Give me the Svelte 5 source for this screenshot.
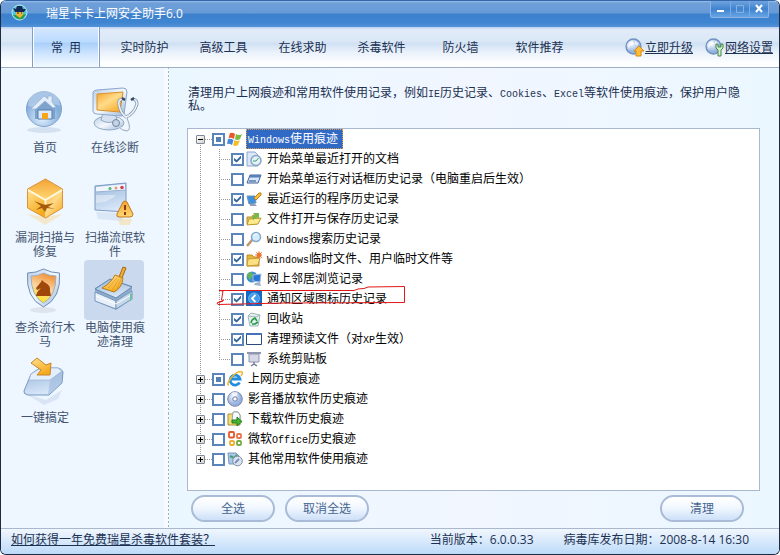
<script>
  const tabs = ["实时防护", "高级工具", "在线求助", "杀毒软件", "防火墙", "软件推荐"];

  const tools = [
    { icon: "home", text: "首页" },
    { icon: "diagnose", text: "在线诊断" },
    { icon: "cube", text: "漏洞扫描与修复" },
    { icon: "scan", text: "扫描流氓软件" },
    { icon: "shield", text: "查杀流行木马" },
    { icon: "broom", text: "电脑使用痕迹清理" },
    { icon: "onekey", text: "一键搞定" },
  ];

  let activeTool = "broom";
  let selected = "windows";

  let groups = [
    {
      id: "windows",
      text: "Windows使用痕迹",
      open: true,
      partial: true,
      items: [
        { icon: "recent", text: "开始菜单最近打开的文档", checked: true },
        { icon: "run", text: "开始菜单运行对话框历史记录（电脑重启后生效）", checked: false },
        { icon: "program", text: "最近运行的程序历史记录", checked: true },
        { icon: "folder", text: "文件打开与保存历史记录", checked: false },
        { icon: "search", text: "Windows搜索历史记录", checked: false },
        { icon: "temp", text: "Windows临时文件、用户临时文件等", checked: true },
        { icon: "network", text: "网上邻居浏览记录", checked: false },
        { icon: "tray", text: "通知区域图标历史记录", checked: true },
        { icon: "recycle", text: "回收站", checked: true },
        { icon: "prefetch", text: "清理预读文件（对XP生效）", checked: true },
        { icon: "clipboard", text: "系统剪贴板", checked: false },
      ],
    },
    { id: "ie", text: "上网历史痕迹", partial: true, items: [] },
    { id: "media", text: "影音播放软件历史痕迹", partial: false, items: [] },
    { id: "download", text: "下载软件历史痕迹", partial: false, items: [] },
    { id: "office", text: "微软Office历史痕迹", partial: false, items: [] },
    { id: "other", text: "其他常用软件使用痕迹", partial: false, items: [] },
  ];

  const intro =
    "清理用户上网痕迹和常用软件使用记录，例如IE历史记录、Cookies、Excel等软件使用痕迹，保护用户隐私。";

  // latin words are set in a half-width face
  function split(text) {
    return text.split(/([A-Za-z]+)/).filter((t) => t);
  }

  function setAll(value) {
    groups = groups.map((g) => ({
      ...g,
      partial: false,
      checked: value,
      items: g.items.map((i) => ({ ...i, checked: value })),
    }));
  }
</script>

{#snippet mixed(text)}
  {#each split(text) as part}{#if /[A-Za-z]/.test(part)}<span class="latin">{part}</span>{:else}{part}{/if}{/each}
{/snippet}

{#snippet toolIcon(name)}
  <svg width="60" height="60" viewBox="0 0 60 60" aria-hidden="true">
    {#if name === "home"}
      <ellipse cx="30" cy="50" rx="17" ry="3" fill="#c9d8ea" opacity=".7" />
      <circle cx="30" cy="29" r="17.500" fill="url(#ball)" stroke="#7fa3cf" />
      <path d="M14 26a16 16 0 0 1 32 0c-8-5-16 4-32 0z" fill="#fff" opacity=".3" />
      <path d="m21 28 11-9 9 9v11H21z" fill="#7da3cd" />
      <path d="m17 29 13-13 4 3v-3h4v6l4 5-3 1-8-7-9 8z" fill="#e3eefa" stroke="#8eacd0" stroke-width=".6" />
      <path d="M24 30h14v9H24z" fill="#dceafa" stroke="#587fae" />
      <path d="M28 33h6v6h-6z" fill="#f8a51c" />
    {:else if name === "diagnose"}
      <ellipse cx="25" cy="43" rx="15" ry="7" fill="url(#steel)" stroke="#92a9c5" />
      <path d="M19 33h12l2 7q-8 5-16 0z" fill="#d5e1f0" stroke="#92a9c5" />
      <path d="M9 12q1-2 4-2l26-2q4 0 4 4l-3 22q0 2-3 2l-24-2q-4 0-4-3z" fill="url(#steel)" stroke="#8ca7ce" />
      <path d="m13 14 26-2-3 20-23-2z" fill="url(#orange)" stroke="#d9902f" />
      <path d="M38 19q-4 1-3 6 2 9 7 12 8-3 11-13 0-4-4-5" fill="none" stroke="#7f94ad" stroke-width="3" />
      <path d="M38 19q-4 1-3 6 2 9 7 12 8-3 11-13 0-4-4-5M42 37q5 13 0 13-5 0-9-5" fill="none" stroke="#edf3f9" stroke-width="1.500" />
      <path d="M43 38q5 12 0 13-5 0-9-5" fill="none" stroke="#98aac0" />
      <path d="m38 18 3 2m6 0 3-2" stroke="#35475d" stroke-width="2.500" />
      <circle cx="32" cy="43" r="3.500" fill="#c3d2e5" stroke="#71869f" />
    {:else if name === "cube"}
      <path d="m13 44 18 11 18-11-18 3z" fill="#f8d793" opacity=".45" />
      <path d="m31.500 9 17 10-17 11-18-11z" fill="url(#amber)" />
      <path d="m13.500 19 18 11v18l-18-10z" fill="url(#yellow)" />
      <path d="m48.500 19-17 11v18l17-10z" fill="url(#orange)" />
      <path d="m31.500 9 17 10v19l-17 10-18-10V19z" fill="none" stroke="#dd9437" stroke-linejoin="round" />
      <path d="m14 20 17.500 10L48 20M31.500 30v4" fill="none" stroke="#fff8dc" stroke-width="2" />
      <path d="m20 31 11 4 9-2-6 4 7 2-8-1-2 4-3-4-6 2 5-4z" fill="#a55a0d" />
    {:else if name === "scan"}
      <path d="m12 42 28 1-2 8-24-2z" fill="#cdddf0" opacity=".6" />
      <path d="m11 16 31-3v29l-31-2z" fill="url(#pane)" stroke="#7d9bc5" />
      <path d="m12 17 29-3v6l-29 2z" fill="#eef5fd" />
      <path d="m11 22 31-2" stroke="#9bb5d6" />
      <circle cx="26" cy="18.500" r="1.500" fill="#4cb66a" />
      <circle cx="32" cy="18" r="1.500" fill="#e49a7e" />
      <circle cx="38" cy="17.500" r="1.800" fill="#d8414e" />
      <path d="M12 25h20q-6 7-20 8z" fill="#fff" opacity=".4" />
      <path d="M39 32q2-2 4 0l6 12q0 3-3 3H35q-3 0-2-3z" fill="url(#amber)" stroke="#c47a1a" />
      <path d="M41 35v5m0 2v3" stroke="#8a3c10" stroke-width="2" />
      <path d="M34 49h14l-2 6H36z" fill="#f8d793" opacity=".5" />
    {:else if name === "shield"}
      <ellipse cx="29" cy="50" rx="13" ry="3" fill="#d9e0ea" opacity=".8" />
      <path d="M13.500 13q9 0 16-4 8 4 16 4 2 25-16 34-18-9-16-34z" fill="url(#steel)" stroke="#6f8fb8" />
      <path d="M17 16q7 0 12.500-3 6 3 12.500 3 0 20-12.500 27Q17 36 17 16z" fill="url(#fire)" stroke="#9cb0c8" />
      <path d="M22 36q1-5 5-8l-4 2-1-2 5-6 1-2 2 2q7 3 6 9l1 5z" fill="#a0480c" />
    {:else if name === "broom"}
      <path d="m11 28 15-9 22 7v13L32 50 11 41z" fill="#8eabcb" />
      <path d="m11 29 15-10 22 8-16 11z" fill="url(#pane)" stroke="#6688b0" />
      <path d="m11 32 21 9v8l-21-8z" fill="#e7f0fa" stroke="#7897bd" />
      <path d="m32 41 16-10v8L32 49z" fill="#c5d7ea" stroke="#7897bd" />
      <path d="m12 36 20 8 15-9" fill="none" stroke="#fff" />
      <path d="m46 33 2 1v6l-2 1z" fill="#6ec19c" />
      <path d="m39 7 3 1-4 10-3-1z" fill="#f5ab2b" stroke="#a66815" />
      <path d="m31 15 8 3q-1 10-9 14l-12-4q9-5 13-13z" fill="url(#yellow)" stroke="#b97c16" />
      <path d="m33 18-9 10m11-9-7 11m9-11-4 10M31 15l8 4" stroke="#d99a26" stroke-width=".7" fill="none" />
    {:else if name === "onekey"}
      <path d="m12 44 20 6 16-10-4 9-14 6z" fill="#d3e1f1" opacity=".8" />
      <path d="m17 24 9-6h18q4 1 5 4l-1 11-13 12H14q-5-1-4-4z" fill="url(#pane)" stroke="#7797c1" />
      <path d="m17 24 10-6h17l4 3-12 9H15z" fill="#e3effb" stroke="#9db5d4" stroke-width=".7" />
      <path d="m36 30 12-9v12L34 45z" fill="#9db9dc" opacity=".6" />
      <path d="m17 13 6-5 9 7 5-2-1 12H23l4-5z" fill="url(#yellow)" stroke="#ca8426" />
    {/if}
  </svg>
{/snippet}

{#snippet icon(name)}
  <svg class="icon" width="16" height="16" viewBox="0 0 16 16" aria-hidden="true">
    {#if name === "windows"}
      <path d="M3 2q3-1 5 1L7 8Q4 6 1.500 7z" fill="#e8582a" />
      <path d="M9 3q3 2 6 0l-2 5q-3 2-5 0z" fill="#7cba42" />
      <path d="M1 8q3-1 5.500 1L5 14q-3-2-5-1z" fill="#4688dc" />
      <path d="M7.500 9q3 2 5.500 0l-2 5q-3 2-5 0z" fill="#f5be2c" />
    {:else if name === "recent"}
      <path d="M1 1h8l3 3v11H1z" fill="#dbe8f7" stroke="#8ba8ce" />
      <circle cx="10" cy="9.500" r="5" fill="#e3f2f4" stroke="#8aa6c4" stroke-width="1.500" />
      <path d="m10 10 2.500-3M10 10H7" stroke="#3f9a86" fill="none" />
    {:else if name === "run"}
      <path d="M4 4h11l-3 8H1z" fill="#d7e6f8" stroke="#41629c" />
      <path d="M4 4h11l-1 2.500H3z" fill="#587fb9" />
      <path d="M3 10h7" stroke="#7a96c0" stroke-width="2" />
    {:else if name === "program"}
      <path d="M1 5h8l1 7-7 1z" fill="#3b91dd" stroke="#7591b5" />
      <path d="M4 13h5l2 2H4z" fill="#8ba2be" />
      <path d="m8 7 5-5q3-1 2 2l-5 5z" fill="#f7c13c" stroke="#c57e1f" />
    {:else if name === "folder"}
      <path d="M1 6h5l1-2h4v9H1z" fill="#e8c34c" stroke="#b58e2c" />
      <path d="m3 8 12-1-3 6-11 1z" fill="#fce98b" stroke="#bd9836" />
      <path d="M7 2h6v6l-2-2-4 3-1-3 3-2z" fill="#73b947" />
    {:else if name === "search"}
      <path d="m1 15 6-7" stroke="#bc956a" stroke-width="2.500" />
      <circle cx="10" cy="6" r="4.500" fill="#d4edfa" stroke="#83a6cf" stroke-width="1.500" />
      <path d="M7.500 5q1-3 4-2" stroke="#fff" fill="none" />
    {:else if name === "temp"}
      <path d="M1 4h5l2 2h5v9H1z" fill="#e5b63c" stroke="#bd8c2b" />
      <path d="m2 8 12-1-2 7-11 1z" fill="#fbe184" stroke="#c99b34" />
      <circle cx="13" cy="4" r="2.500" fill="#ee7b35" />
      <path d="M13 0v8M9 4h7M10 1l6 6m0-6-6 6" stroke="#e77333" stroke-width=".7" />
    {:else if name === "network"}
      <circle cx="6" cy="6" r="5.500" fill="#3d8fcd" />
      <path d="M2 2q5-2 5 2L4 9 1 5z" fill="#62b55e" />
      <path d="m7 4 8-1-1 8-7-1z" fill="#2677d8" stroke="#a8bfd9" />
      <path d="m9 12 5-1 1 4-7-1z" fill="#a2b1cb" />
    {:else if name === "tray"}
      <path d="M0 0h16v15H0z" fill="#1869c5" />
      <circle cx="8" cy="7.500" r="5.500" fill="#429bea" stroke="#84c2f7" stroke-width=".7" />
      <path d="M9.500 4 6 7.500l3.500 3.500" fill="none" stroke="#fff" stroke-width="1.800" />
    {:else if name === "recycle"}
      <path d="m2 5 3-3 9 2-2 11H4z" fill="#e4f1f0" stroke="#9fb5bb" />
      <path d="m2 5 8 1 4-2" fill="none" stroke="#9fb5bb" />
      <path d="m6 9 3-2 2 3m1 1-3 2H6m-1-1 1-3" stroke="#239940" stroke-width="1.600" fill="none" />
    {:else if name === "prefetch"}
      <path d="M.5 2.500h15v11H.5z" fill="#fff" stroke="#294b80" />
      <path d="M0 2h16v2H0z" fill="#4372b7" />
    {:else if name === "clipboard"}
      <path d="M3 3h10v8H3z" fill="#d6d8e8" stroke="#9295b0" />
      <path d="M1 2h14" stroke="#9295b0" stroke-width="2" />
      <path d="M8 11v3m-3 1 3-2 3 2" stroke="#77799a" fill="none" stroke-width="1.500" />
    {:else if name === "ie"}
      <path d="M12.500 11.500A5 5 0 1 1 13 8H4" fill="none" stroke="#238ce0" stroke-width="2.800" />
      <path d="M2 14Q-1 14 4 7 11-1 15 1q1 1-1 4" fill="none" stroke="#efb52c" stroke-width="1.500" />
    {:else if name === "media"}
      <circle cx="8" cy="8" r="7.300" fill="url(#disc)" stroke="#8384ae" />
      <path d="M8 8 4 2q4-2 7 0z" fill="#fff" opacity=".7" />
      <circle cx="8" cy="8" r="2.200" fill="#fff" stroke="#75739e" />
    {:else if name === "download"}
      <path d="M1 3h5l1-2h4l2 3v10H1z" fill="#f2da77" stroke="#a79336" />
      <path d="M6 1h5l2 3v6H5z" fill="#f7fbfd" stroke="#92a5b1" />
      <path d="M5 9h5V6l5 4.500-5 4.500v-3H5z" fill="#44b72e" stroke="#237820" />
    {:else if name === "office"}
      <g fill="none" stroke-width="1.800">
        <rect x="2" y="1" width="5" height="5.500" rx="1" stroke="#e4572b" />
        <rect x="10" y="3" width="4" height="4" rx="1" stroke="#e8764a" />
        <rect x="3" y="10" width="4" height="4" rx="1" stroke="#edaf32" />
        <rect x="10" y="10" width="4" height="4" rx="1" stroke="#75ae45" />
      </g>
    {:else if name === "other"}
      <path d="M1 2h8l3 3v8H2z" fill="#a9c8ea" stroke="#7998bd" />
      <path d="m3 5 4 2 3-3" stroke="#4e9c73" fill="none" stroke-width="2" />
      <circle cx="10.500" cy="10" r="4.800" fill="#dbe5f0" stroke="#7e8ea7" />
      <path d="m8 12 4-4" stroke="#7a91ba" stroke-width="2" />
    {/if}
  </svg>
{/snippet}

{#snippet globe(green)}
  <svg width="20" height="20" viewBox="0 0 20 20" aria-hidden="true">
    <circle cx="8.500" cy="8.500" r="7.500" fill="url(#disc)" stroke="#6f92c0" stroke-width="1.300" />
    <path d="M2 7q2-5 6-4l1 3-4 2-1 4zM10 3l4 2-2 3-2-2z" fill="#fff" opacity=".65" />
    {#if green}
      <path d="M11 6v4l2 2v6h3v-6l2-2V6h-2v3h-3V6z" fill="#d4f0c8" stroke="#438748" />
    {:else}
      <path d="m14 8 5 5h-3v5h-5v-5H9z" fill="#ffbf35" stroke="#d78715" />
    {/if}
  </svg>
{/snippet}

<svg class="defs" width="0" height="0" aria-hidden="true">
  <defs>
    <radialGradient id="ball" cx=".45" cy=".75">
      <stop offset="0" stop-color="#e5f3ff" /><stop offset="1" stop-color="#86aedb" />
    </radialGradient>
    <radialGradient id="disc" cx=".4" cy=".35">
      <stop offset="0" stop-color="#f6faff" /><stop offset="1" stop-color="#93b2df" />
    </radialGradient>
    <linearGradient id="steel" x2="1" y2="1">
      <stop stop-color="#b8cce4" /><stop offset=".5" stop-color="#f3f8fd" /><stop offset="1" stop-color="#9bb5d4" />
    </linearGradient>
    <linearGradient id="pane" x2=".3" y2="1">
      <stop stop-color="#96b5d9" /><stop offset="1" stop-color="#d6e6f8" />
    </linearGradient>
    <linearGradient id="orange" x2=".8" y2="1">
      <stop stop-color="#f6a22c" /><stop offset=".5" stop-color="#ffdc8a" /><stop offset="1" stop-color="#f8a92b" />
    </linearGradient>
    <linearGradient id="amber" y2="1" x2="0">
      <stop stop-color="#f3a436" /><stop offset="1" stop-color="#ffd873" />
    </linearGradient>
    <linearGradient id="yellow" x2=".5" y2="1">
      <stop stop-color="#ffe493" /><stop offset="1" stop-color="#f6a91c" />
    </linearGradient>
    <linearGradient id="fire" x1=".7" x2=".4" y2="1">
      <stop stop-color="#f28a2d" /><stop offset=".5" stop-color="#fbd4a0" /><stop offset="1" stop-color="#ffe920" />
    </linearGradient>
  </defs>
</svg>

<div class="window">
  <header class="titlebar">
    <svg width="17" height="17" viewBox="0 0 17 17" aria-hidden="true">
      <circle cx="8.500" cy="8.500" r="7.500" fill="#4dc5d8" stroke="#b4e5f1" />
      <path d="M2 11q3 5 10 4l3-5-5 1z" fill="#2b9b4c" />
      <path d="M5 7h7v4l-3 3-4-3z" fill="#edb42c" />
      <path d="m2 4 3 1 1-3h5l1 3h3l-2 3H4z" fill="#152a52" />
      <path d="M6 9h2m2 0h1" stroke="#253345" />
    </svg>
    <h1>瑞星卡卡上网安全助手6.0</h1>
    <div class="controls">
      <button aria-label="最小化"><svg width="12" height="12"><path d="M2 8h7" stroke="#fff" stroke-width="2" /></svg></button>
      <button aria-label="最大化" disabled><svg width="12" height="12"><path d="M2.500 2.500h7v7h-7z" fill="none" stroke="#86b1e3" /></svg></button>
      <button aria-label="关闭"><svg width="12" height="12"><path d="m3 2 6 7m0-7-6 7" stroke="#fff" stroke-width="2" /></svg></button>
    </div>
  </header>

  <nav>
    <button class="tab active">常&nbsp;&nbsp;用</button>
    <div class="tabs">
      {#each tabs as tab}
        <button class="tab">{tab}</button>
      {/each}
    </div>
    <div class="links">
      <a href="#update">{@render globe(false)}<span>立即升级</span></a>
      <a href="#settings">{@render globe(true)}<span>网络设置</span></a>
    </div>
  </nav>

  <main>
    <aside>
      {#each tools as tool}
        <button
          class="tool"
          class:active={tool.icon === activeTool}
          on:click={() => (activeTool = tool.icon)}
        >
          <span class="picture">{@render toolIcon(tool.icon)}</span>
          <span class="caption">{tool.text}</span>
        </button>
      {/each}
    </aside>

    <section>
      <p class="intro">{@render mixed(intro)}</p>

      <div class="tree">
        <ul class="groups">
          {#each groups as group}
            <li>
              <div class="row">
                <button
                  class="expander"
                  class:open={group.open}
                  aria-label={group.text}
                  on:click={() => (group.open = !group.open)}
                ></button>
                <span class="wire"></span>
                <input
                  type="checkbox"
                  id={group.id}
                  bind:checked={group.checked}
                  bind:indeterminate={group.partial}
                />
                {@render icon(group.id)}
                <label for={group.id} class:selected={group.id === selected}>{@render mixed(group.text)}</label>
              </div>
              {#if group.open && group.items.length}
                <ul class="items">
                  {#each group.items as item}
                    <li class="row">
                      <span class="wire"></span>
                      <input type="checkbox" id={item.icon} bind:checked={item.checked} />
                      {@render icon(item.icon)}
                      <label for={item.icon}>{@render mixed(item.text)}</label>
                    </li>
                  {/each}
                </ul>
              {/if}
            </li>
          {/each}
        </ul>
        <!-- hand-drawn mark around the tray icon entry -->
        <svg class="mark" width="192" height="22" viewBox="0 0 192 22" aria-hidden="true">
          <path
            d="M3 5.500h135l4-1.500 6-.5 4-1.500 36.500-.5v16L69 18 2 19.500M3 5.500l4 .5-1.500 9 2 .5L2 17.500m0 2-1-1.500 6-2"
            fill="none"
            stroke="#e01818"
          />
        </svg>
      </div>

      <div class="actions">
        <button on:click={() => setAll(true)}>全选</button>
        <button on:click={() => setAll(false)}>取消全选</button>
        <button class="clean">清理</button>
      </div>
    </section>
  </main>

  <footer>
    <a href="#free">如何获得一年免费瑞星杀毒软件套装？</a>
    <span class="version">当前版本：6.0.0.33</span>
    <span>病毒库发布日期：2008-8-14 16:30</span>
  </footer>
</div>

<style>
  :global(body) {
    background: #fff;
  }
  .defs {
    position: absolute;
  }
  .window {
    display: flex;
    flex-direction: column;
    box-sizing: border-box;
    min-height: 100vh;
    border: 1px solid #1d2a40;
    border-top-color: #3468ac;
    border-radius: 6px;
    overflow: hidden;
    background: #eef6ff;
    color: #1c3152;
    font: 12px/14px "Open Sans", "Noto Sans CJK SC", sans-serif;
  }
  button {
    padding: 0;
    border: none;
    background: none;
    color: inherit;
    font: inherit;
  }
  a {
    color: inherit;
  }
  .titlebar {
    display: flex;
    align-items: flex-start;
    height: 26px;
    padding: 0 10px;
    color: #fff;
    background: linear-gradient(#9abce6 0, #6f9fd9 2px, #669ad7 12px, #3c80cc 13px, #3f86d2 22px, #5492d7 100%);
  }
  .titlebar > svg {
    margin-top: 3px;
  }
  h1 {
    flex: 1;
    margin: 6px 0 0 18px;
    font-size: 12px;
    font-weight: normal;
    line-height: 14px;
  }
  .controls {
    display: flex;
    border: 1px solid #8db5e4;
    border-top: none;
    border-radius: 0 0 2px 2px;
  }
  .controls button {
    display: flex;
    align-items: center;
    justify-content: center;
    width: 19px;
    height: 16px;
    background: linear-gradient(#6fa3de, #3f83cf 50%, #66a4e4);
  }
  .controls button + button {
    border-left: 1px solid #7caae0;
  }

  nav {
    display: flex;
    height: 40px;
    border-bottom: 1px solid #9fb0c6;
    background: linear-gradient(#b7cff0 0, #e2ecf9 3px, #d9e7f6 15px, #cfe0f2 16px, #e9f1fb 25px, #fdfeff 36px);
  }
  .tab {
    width: 79px;
    height: 40px;
    padding-top: 2px;
  }
  .tab.active {
    box-sizing: border-box;
    width: 68px;
    margin: 0 5px 0 31px;
    border: 1px solid #7f9fc8;
    border-width: 0 1px;
    box-shadow: inset 1px 0 #fff, inset -1px 0 #fff;
    background: linear-gradient(#d6e8ff 0, #badbff 15px, #a9cffa 16px, #d2e7ff 28px, #f2f9ff 40px);
  }
  .tabs {
    display: flex;
    flex: 1;
  }
  .links {
    display: flex;
    align-items: center;
    gap: 12px;
    padding: 2px 6px 0 0;
  }
  .links a {
    display: flex;
    align-items: center;
  }

  main {
    display: flex;
    flex: 1;
  }
  aside {
    display: grid;
    grid-template-columns: 70px 70px;
    grid-auto-rows: 90px;
    align-content: start;
    box-sizing: border-box;
    width: 167px;
    padding: 12px 0 0 9px;
    border-right: 4px solid #f7fbff;
  }
  .tool {
    display: flex;
    flex-direction: column;
    align-items: center;
    color: #42546f;
  }
  .picture {
    width: 60px;
    height: 60px;
    margin-right: 2px;
    border-radius: 4px;
  }
  .tool.active .picture {
    background: #cbd9ee;
  }
  .caption {
    width: 60px;
    padding-top: 1px;
  }
  section {
    display: flex;
    flex: 1;
    flex-direction: column;
    min-width: 0;
    padding: 19px 19px 6px 18px;
    border-left: 1px solid;
    border-image: repeating-linear-gradient(#a4afc2 0 2px, #f4faff 2px 4px) 1;
    background: linear-gradient(90deg, #ebf7ff, #f1f6ff 50%, #ebf7ff);
  }
  .intro {
    margin: 0 16px 16px 1px;
    line-height: 12px;
  }
  .latin {
    display: inline-block;
    font-family: "Liberation Mono", monospace;
    font-size: 10px;
    line-height: 10px;
  }
  .tree {
    position: relative;
    flex: 1;
    border: 1px solid #a9b7cf;
    background: #fff;
    color: #000;
  }
  ul {
    margin: 0;
    padding: 0;
    list-style: none;
  }
  .groups {
    padding-left: 8px;
    background: repeating-linear-gradient(#999 0 1px, #fff 1px 2px) 12px 10px / 1px calc(100% - 20px) no-repeat;
  }
  .items {
    margin-left: 23px;
    background: repeating-linear-gradient(#999 0 1px, #fff 1px 2px) 0 0 / 1px calc(100% - 10px) no-repeat;
  }
  .row {
    display: flex;
    align-items: center;
    height: 20px;
  }
  .wire {
    width: 7px;
    height: 1px;
    background: repeating-linear-gradient(90deg, #999 0 1px, #fff 1px 2px);
  }
  .items .wire {
    width: 12px;
  }
  .expander {
    position: relative;
    box-sizing: border-box;
    width: 9px;
    height: 9px;
    border: 1px solid #7f8897;
    border-radius: 1px;
    background: linear-gradient(135deg, #fff, #d5d3cc);
  }
  .expander::before,
  .expander::after {
    content: "";
    position: absolute;
    top: 3px;
    left: 1px;
    width: 5px;
    height: 1px;
    background: #000;
  }
  .expander::after {
    transform: rotate(90deg);
  }
  .expander.open::after {
    display: none;
  }
  input {
    appearance: none;
    display: grid;
    place-content: center;
    box-sizing: border-box;
    width: 13px;
    height: 13px;
    margin: 0;
    border: 2px solid #5a84ba;
    background: #fff;
  }
  input:checked::before {
    content: "";
    width: 7px;
    height: 7px;
    background: #31659f;
    clip-path: polygon(0 35%, 38% 64%, 100% 0, 100% 38%, 38% 100%, 0 70%);
  }
  input:indeterminate::before {
    content: "";
    width: 5px;
    height: 5px;
    background: #5580b5;
    clip-path: none;
  }
  .icon {
    margin: 0 3px 0 2px;
  }
  label {
    padding: 0 2px;
    line-height: 20px;
    white-space: nowrap;
  }
  label.selected {
    padding-right: 5px;
    outline: 1px dotted #d8a050;
    outline-offset: -1px;
    background: #316ac5;
    color: #fff;
  }
  .mark {
    position: absolute;
    top: 156px;
    left: 28px;
    pointer-events: none;
  }

  .actions {
    display: flex;
    gap: 10px;
    padding: 4px 16px 0 4px;
  }
  .actions button {
    width: 84px;
    height: 27px;
    border: 2px solid #a9bbd6;
    border-radius: 14px;
    background: linear-gradient(#fff, #f2f8ff 45%, #cde0f8);
    color: #46648f;
  }
  .actions .clean {
    margin-left: auto;
  }

  footer {
    display: flex;
    align-items: center;
    gap: 30px;
    box-sizing: border-box;
    height: 26px;
    padding: 0 30px 3px 10px;
    border-top: 1px solid #a9b8cd;
    background: linear-gradient(#f0f6fd, #d7e9fc 50%, #bcdaf9);
  }
  .version {
    margin-left: auto;
  }
</style>
